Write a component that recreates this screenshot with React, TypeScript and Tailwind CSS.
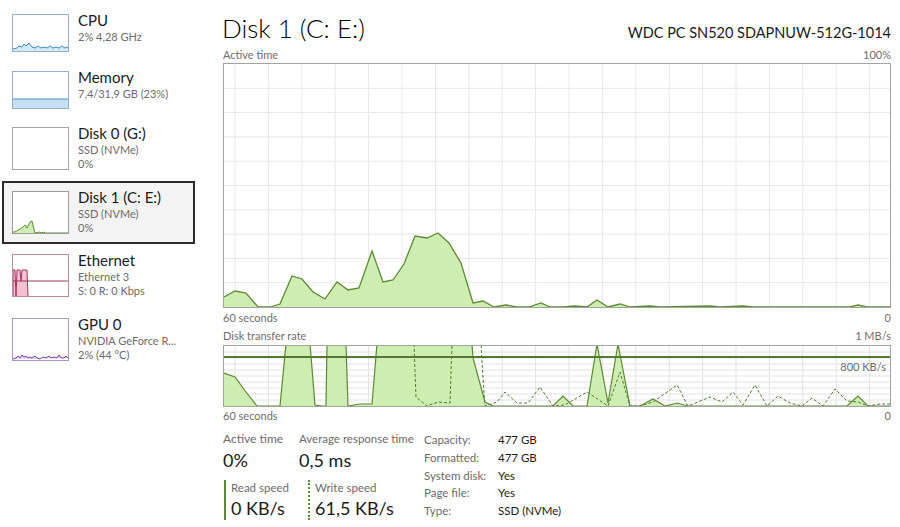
import React from "react"

type Pt = [number, number]

const activePts: Pt[] = [
  [0, 233], [11, 227], [22, 229], [34, 243], [46, 243], [56, 240], [68, 212], [78, 215], [89, 228], [101, 235],
  [113, 218], [124, 226], [135, 224], [148, 187], [159, 218], [169, 216], [180, 200], [191, 172], [203, 174],
  [214, 169], [225, 179], [237, 199], [249, 239], [259, 237], [270, 243], [282, 241], [293, 243], [305, 243],
  [317, 239], [326, 243], [339, 243], [351, 242], [363, 243], [373, 236], [384, 243], [396, 240], [406, 243],
  [426, 242], [436, 243], [486, 242], [496, 243], [519, 242], [529, 243], [626, 243], [634, 241], [643, 243],
  [666, 243],
]

const readPts: Pt[] = [
  [0, 27], [11, 31], [22, 46], [33, 60], [56, 60], [62, -2], [86, -2], [91, 59], [98, 60], [102, 60], [103, -2],
  [122, -2], [124, 60], [136, 58], [148, 58], [153, -2], [248, -2], [249, 12], [261, 56], [269, 60], [329, 60],
  [339, 50], [349, 60], [363, 60], [373, -2], [384, 57], [394, -2], [406, 60], [416, 60], [429, 53], [441, 60],
  [453, 57], [464, 60], [623, 60], [634, 50], [644, 60], [666, 60],
]

const writePts: Pt[] = [
  [190, -2], [192, 51], [203, 60], [214, 56], [226, 57], [228, -2], [257, -2], [259, 32], [261, 60], [273, 56],
  [281, 46], [293, 57], [304, 57], [316, 41], [329, 60], [341, 59], [363, 46], [384, 60], [396, 26], [406, 60],
  [416, 60], [429, 56], [453, 39], [464, 60], [486, 51], [498, 56], [509, 46], [519, 59], [531, 39], [543, 60],
  [554, 50], [566, 57], [578, 60], [588, 52], [599, 60], [611, 43], [623, 55], [634, 56], [644, 60], [656, 58],
  [666, 58],
]

const toStr = (pts: Pt[]) => pts.map((p) => p.join(",")).join(" ")
const toArea = (pts: Pt[], bottom: number) =>
  `${pts[0][0]},${bottom} ${toStr(pts)} ${pts[pts.length - 1][0]},${bottom}`

const vLines = Array.from({ length: 20 }, (_, i) => 11 + i * 33.4)

function Grid({ h, rows, color }: { h: number; rows: number; color: string }) {
  return (
    <g stroke={color} strokeWidth={1}>
      {vLines.map((x) => (
        <line key={x} x1={x} y1={0} x2={x} y2={h} />
      ))}
      {Array.from({ length: rows - 1 }, (_, i) => (h / rows) * (i + 1)).map((y) => (
        <line key={y} x1={0} y1={y} x2={666} y2={y} />
      ))}
    </g>
  )
}

function Thumb({ kind, tall }: { kind: string; tall?: boolean }) {
  const h = tall ? 43 : 38
  const border: Record<string, string> = {
    cpu: "border-[#8fb2d0]",
    mem: "border-[#8fb2d0]",
    disk: "border-[#a3a3a3]",
    disk1: "border-[#9a9a9a]",
    eth: "border-[#b98aa0]",
    gpu: "border-[#a996c4]",
  }
  return (
    <div className={`w-[57px] shrink-0 border bg-white ${border[kind]} ${tall ? "h-[43px]" : "h-[38px]"}`}>
      <svg width="100%" height="100%" viewBox={`0 0 55 ${h - 2}`} preserveAspectRatio="none">
        {kind === "cpu" && (
          <>
            <polygon
              points="0,36 0,34 4,33 6,31 9,32 11,29 13,31 16,28 19,32 22,33 25,31 28,33 31,32 34,33 37,31 40,33 43,32 46,33 49,31 52,33 55,32 55,36"
              fill="#d3eaf6"
            />
            <polyline
              points="0,34 4,33 6,31 9,32 11,29 13,31 16,28 19,32 22,33 25,31 28,33 31,32 34,33 37,31 40,33 43,32 46,33 49,31 52,33 55,32"
              fill="none"
              stroke="#3b8cc4"
              strokeWidth={1}
            />
          </>
        )}
        {kind === "mem" && (
          <>
            <rect x={0} y={27} width={55} height={9} fill="#c7dff5" />
            <line x1={0} y1={27} x2={55} y2={27} stroke="#4a8fcd" strokeWidth={1} />
          </>
        )}
        {kind === "disk1" && (
          <>
            <polygon points="0,41 2,40 5,38 9,36 12,33 14,36 17,30 19,29 21,37 22,41" fill="#cdeeb0" />
            <polyline
              points="0,40 2,40 5,38 9,36 12,33 14,36 17,30 19,29 21,37 22,41 27,40 28,41 31,40 32,41 55,41"
              fill="none"
              stroke="#5b8a34"
              strokeWidth={1}
            />
          </>
        )}
        {kind === "eth" && (
          <>
            <polygon points="0,41 0,15 2,15 3,41 4,15 7,15 8,26 9,15 14,15 15,41" fill="#f3bfd1" />
            <polyline
              points="0,41 0,15 2,15 3,41 4,15 7,15 8,26 9,15 14,15 15,41"
              fill="none"
              stroke="#a3375f"
              strokeWidth={1}
            />
            <line x1={0} y1={26} x2={55} y2={26} stroke="#a3375f" strokeWidth={1} />
          </>
        )}
        {kind === "gpu" && (
          <polyline
            points="0,40 3,39 5,37 7,39 9,36 11,38 13,37 15,39 17,38 19,39 22,37 24,39 27,40 30,38 33,39 36,37 38,39 41,38 44,39 46,36 48,39 51,39 53,37 55,39"
            fill="#e4d6f3"
            stroke="#7a3fb5"
            strokeWidth={1}
          />
        )}
      </svg>
    </div>
  )
}

const items = [
  { kind: "cpu", title: "CPU", lines: ["2% 4,28 GHz"], h: "h-[57px]" },
  { kind: "mem", title: "Memory", lines: ["7,4/31,9 GB (23%)"], h: "h-[56px]" },
  { kind: "disk", title: "Disk 0 (G:)", lines: ["SSD (NVMe)", "0%"], h: "h-[64px]" },
  { kind: "disk1", title: "Disk 1 (C: E:)", lines: ["SSD (NVMe)", "0%"], h: "h-[63px]", selected: true },
  { kind: "eth", title: "Ethernet", lines: ["Ethernet 3", "S: 0 R: 0 Kbps"], h: "h-[64px]" },
  { kind: "gpu", title: "GPU 0", lines: ["NVIDIA GeForce R...", "2% (44 °C)"], h: "h-[64px]" },
]

export default function App() {
  return (
    <div className="flex w-[900px] h-[527px] overflow-hidden bg-white text-[#1a1a1a] font-['Segoe_UI',Lato,'Noto_Sans',sans-serif]">
      {/* Sidebar */}
      <div className="w-[200px] shrink-0 pt-[4px] pl-[2px]">
        {items.map((it) => (
          <div
            key={it.title}
            className={`w-[193px] flex gap-[9px] pl-[8px] pt-[8px] border-2 ${it.h} ${
              it.selected ? "border-[#2b2b2b] bg-[#f3f3f3]" : "border-transparent"
            }`}
          >
            <Thumb kind={it.kind} tall={it.lines.length > 1} />
            <div className="-mt-[3px] min-w-0">
              <div className="text-[15px] leading-[19px]">{it.title}</div>
              {it.lines.map((l) => (
                <div key={l} className="text-[11px] leading-[14px] text-[#6b6b6b] whitespace-nowrap">
                  {l}
                </div>
              ))}
            </div>
          </div>
        ))}
      </div>

      {/* Main panel */}
      <div className="flex-1 pl-[23px] pr-[9px] pt-[10px]">
        <div className="flex items-baseline justify-between">
          <h1 className="text-[26px] leading-[36px] font-light text-black -ml-[1px]">Disk 1 (C: E:)</h1>
          <div className="text-[14.5px] leading-[20px]">WDC PC SN520 SDAPNUW-512G-1014</div>
        </div>

        <div className="mt-[2px] flex justify-between text-[11px] leading-[14px] text-[#6e6e6e]">
          <span>Active time</span>
          <span>100%</span>
        </div>
        <div className="mt-[1px] h-[245px] border border-[#a3a3a3]">
          <svg width="666" height="243" viewBox="0 0 666 243" className="block">
            <Grid h={243} rows={10} color="#e8e8e8" />
            <polygon points={toArea(activePts, 243)} fill="#cdeeb0" />
            <polyline points={toStr(activePts)} fill="none" stroke="#5b8a34" strokeWidth={1.3} />
          </svg>
        </div>
        <div className="mt-[3px] flex justify-between text-[11px] leading-[14px] text-[#6e6e6e]">
          <span>60 seconds</span>
          <span>0</span>
        </div>

        <div className="mt-[4px] flex justify-between text-[11px] leading-[14px] text-[#6e6e6e]">
          <span>Disk transfer rate</span>
          <span>1 MB/s</span>
        </div>
        <div className="relative mt-[2px] h-[62px] border border-[#a3a3a3]">
          <svg width="666" height="60" viewBox="0 0 666 60" className="block">
            <Grid h={60} rows={10} color="#e2e2e2" />
            <polygon points={toArea(readPts, 60)} fill="#cdeeb0" />
            <polyline points={toStr(readPts)} fill="none" stroke="#5b8a34" strokeWidth={1.2} />
            <polyline
              points={toStr(writePts)}
              fill="none"
              stroke="#4f7a2f"
              strokeWidth={1}
              strokeDasharray="3 2"
            />
            <line x1={0} y1={11} x2={666} y2={11} stroke="#4f7a2f" strokeWidth={2} />
          </svg>
          <span className="absolute right-[4px] top-[14px] text-[11px] leading-[14px] text-[#6e6e6e]">800 KB/s</span>
        </div>
        <div className="mt-[2px] flex justify-between text-[11px] leading-[14px] text-[#6e6e6e]">
          <span>60 seconds</span>
          <span>0</span>
        </div>

        {/* Stats */}
        <div className="mt-[8px] flex">
          <div className="w-[201px] shrink-0">
            <div className="flex">
              <div className="w-[76px]">
                <div className="text-[12px] leading-[16px] text-[#6b6b6b]">Active time</div>
                <div className="text-[18px] leading-[26px]">0%</div>
              </div>
              <div>
                <div className="text-[11.5px] leading-[16px] text-[#6b6b6b] whitespace-nowrap">Average response time</div>
                <div className="text-[18px] leading-[26px]">0,5 ms</div>
              </div>
            </div>
            <div className="mt-[7px] flex pl-[1px]">
              <div className="w-[84px] h-[40px] border-l-2 border-[#5b8a34] pl-[5px]">
                <div className="text-[11.5px] leading-[16px] text-[#6b6b6b]">Read speed</div>
                <div className="text-[18px] leading-[24px] whitespace-nowrap">0 KB/s</div>
              </div>
              <div className="h-[40px] border-l-2 border-dotted border-[#5b8a34] pl-[5px]">
                <div className="text-[11.5px] leading-[16px] text-[#6b6b6b]">Write speed</div>
                <div className="text-[18px] leading-[24px] whitespace-nowrap">61,5 KB/s</div>
              </div>
            </div>
          </div>
          <div className="grid grid-cols-[74px_auto] text-[11.5px] leading-[17px]">
            <span className="text-[#6b6b6b]">Capacity:</span>
            <span>477 GB</span>
            <span className="text-[#6b6b6b]">Formatted:</span>
            <span>477 GB</span>
            <span className="text-[#6b6b6b]">System disk:</span>
            <span>Yes</span>
            <span className="text-[#6b6b6b]">Page file:</span>
            <span>Yes</span>
            <span className="text-[#6b6b6b]">Type:</span>
            <span>SSD (NVMe)</span>
          </div>
        </div>
      </div>
    </div>
  )
}
